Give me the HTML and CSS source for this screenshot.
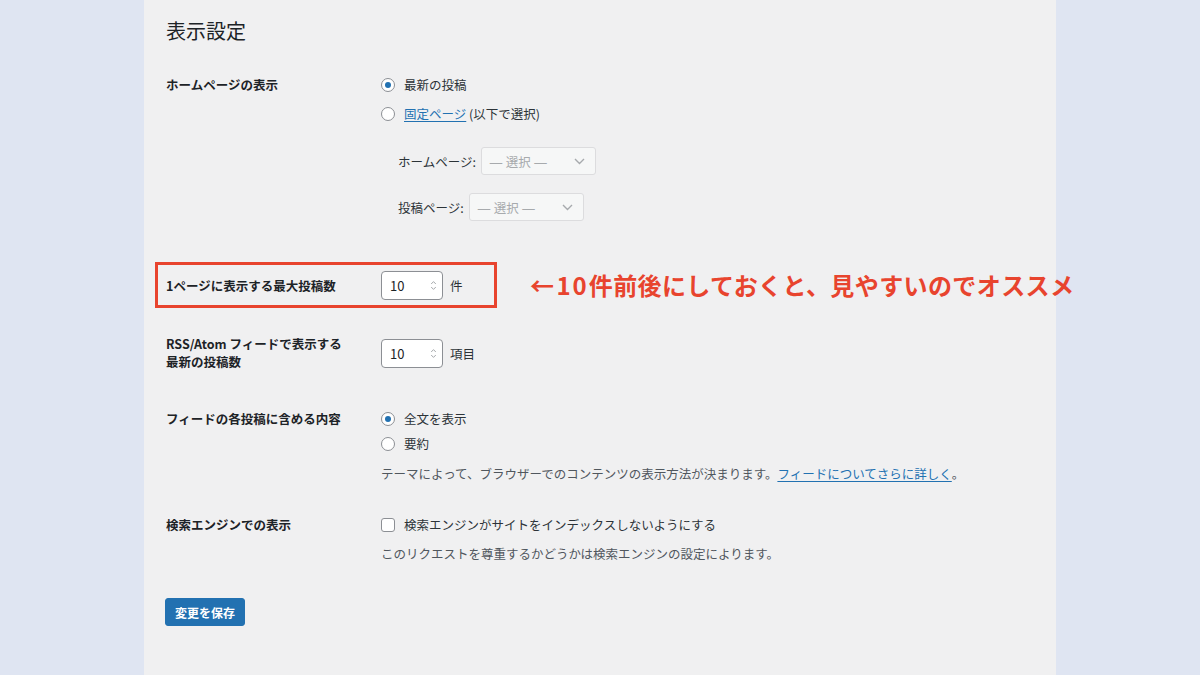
FILE: index.html
```html
<!DOCTYPE html>
<html lang="ja">
<head>
<meta charset="utf-8">
<title>表示設定</title>
<link rel="stylesheet" href="styles.css">
</head>
<body>
<div class="page">
  <div class="side"></div>
  <main class="panel">
    <h1 class="title">表示設定</h1>

    <div class="row row-home">
      <div class="th">ホームページの表示</div>
      <div class="td">
        <div class="opt"><span class="radio on"></span>最新の投稿</div>
        <div class="opt"><span class="radio"></span><a class="link" href="#">固定ページ</a>&nbsp;(以下で選択)</div>
        <div class="sub sub-first"><span class="sub-label">ホームページ:</span><span class="select"><span class="sel-text">— 選択 —</span><svg class="chev" width="11" height="7" viewBox="0 0 11 7"><path d="M1 1l4.5 4.5L10 1" fill="none" stroke="#a7aaad" stroke-width="1.4"/></svg></span></div>
        <div class="sub"><span class="sub-label">投稿ページ:</span><span class="select"><span class="sel-text">— 選択 —</span><svg class="chev" width="11" height="7" viewBox="0 0 11 7"><path d="M1 1l4.5 4.5L10 1" fill="none" stroke="#a7aaad" stroke-width="1.4"/></svg></span></div>
      </div>
    </div>

    <div class="hl-wrap">
      <div class="row hl">
        <div class="th">1ページに表示する最大投稿数</div>
        <div class="td td-inline">
          <span class="num">10<svg class="spin" width="7" height="11" viewBox="0 0 7 11"><path d="M1.2 4L3.5 1.6 5.8 4M1.2 7l2.3 2.4L5.8 7" fill="none" stroke="#a7aaad" stroke-width="1"/></svg></span>
          <span class="unit">件</span>
        </div>
      </div>
      <p class="note">←<span class="note-num">10</span>件前後にしておくと、見やすいのでオススメ</p>
    </div>

    <div class="row row-rss">
      <div class="th th-two">RSS/Atom フィードで表示する<br>最新の投稿数</div>
      <div class="td td-inline td-rss">
        <span class="num">10<svg class="spin" width="7" height="11" viewBox="0 0 7 11"><path d="M1.2 4L3.5 1.6 5.8 4M1.2 7l2.3 2.4L5.8 7" fill="none" stroke="#a7aaad" stroke-width="1"/></svg></span>
        <span class="unit">項目</span>
      </div>
    </div>

    <div class="row row-feed">
      <div class="th">フィードの各投稿に含める内容</div>
      <div class="td">
        <div class="opt"><span class="radio on"></span>全文を表示</div>
        <div class="opt"><span class="radio"></span>要約</div>
        <p class="desc desc-feed">テーマによって、ブラウザーでのコンテンツの表示方法が決まります。<a class="link" href="#">フィードについてさらに詳しく</a>。</p>
      </div>
    </div>

    <div class="row row-search">
      <div class="th">検索エンジンでの表示</div>
      <div class="td">
        <div class="opt"><span class="check"></span>検索エンジンがサイトをインデックスしないようにする</div>
        <p class="desc desc-search">このリクエストを尊重するかどうかは検索エンジンの設定によります。</p>
      </div>
    </div>

    <button class="btn" type="button">変更を保存</button>
  </main>
  <div class="side"></div>
</div>
</body>
</html>
```

FILE: styles.css
```css
* { box-sizing: border-box; }
html, body { margin: 0; padding: 0; }
body {
  width: 1200px;
  height: 675px;
  overflow: hidden;
  background: #dfe5f2;
  font-family: "Noto Sans CJK JP", "Noto Sans", sans-serif;
  color: #2c3338;
  font-size: 12.5px;
}
.page {
  display: flex;
  height: 675px;
}
.side {
  width: 144px;
  flex: none;
  background: #dfe5f2;
}
.panel {
  width: 912px;
  flex: none;
  background: #f0f0f1;
  padding: 17px 0 0 22px;
  position: relative;
  z-index: 1;
  overflow: visible;
}
.title {
  margin: 0;
  font-size: 20px;
  line-height: 28px;
  font-weight: 400;
  color: #1d2327;
}
.row {
  display: flex;
  align-items: flex-start;
}
.th {
  width: 215px;
  flex: none;
  font-weight: 700;
  color: #1d2327;
  font-size: 12.5px;
}
.td { flex: none; }

.row-home { margin-top: 25px; }
.row-home .th { line-height: 29px; }
.row-home .opt { line-height: 29px; height: 29px; }

.opt {
  display: flex;
  align-items: center;
  white-space: nowrap;
}
.radio {
  width: 14px;
  height: 14px;
  border-radius: 50%;
  border: 1px solid #8c8f94;
  background: #fff;
  margin-right: 9px;
  flex: none;
  display: flex;
  align-items: center;
  justify-content: center;
}
.radio.on::after {
  content: "";
  width: 6px;
  height: 6px;
  border-radius: 50%;
  background: #2271b1;
}
.check {
  width: 14px;
  height: 14px;
  border-radius: 3px;
  border: 1px solid #8c8f94;
  background: #fff;
  margin-right: 9px;
  flex: none;
}
.link {
  color: #2271b1;
  text-decoration: underline;
  text-underline-offset: 2px;
}

.sub {
  display: flex;
  align-items: center;
  gap: 5px;
  margin-left: 17px;
  margin-top: 18px;
  color: #2c3338;
}
.sub-first { margin-top: 19px; }
.select {
  display: flex;
  align-items: center;
  justify-content: space-between;
  width: 115px;
  height: 28px;
  padding: 0 10px 0 8px;
  border: 1px solid #dcdcde;
  border-radius: 3px;
  background: #f6f7f7;
  color: #a7aaad;
}
.sel-text { font-family: "Liberation Sans", "Noto Sans CJK JP", sans-serif; }

.hl-wrap {
  display: flex;
  align-items: center;
  margin-top: 41px;
  margin-left: -11px;
}
.hl {
  flex: none;
  width: 342px;
  height: 46px;
  border: 3px solid #e8442e;
  padding: 0 0 0 8px;
  align-items: center;
}
.td-inline {
  display: flex;
  align-items: center;
  gap: 7px;
}
.num {
  display: flex;
  align-items: center;
  justify-content: space-between;
  width: 62px;
  height: 29px;
  border: 1px solid #8c8f94;
  border-radius: 4px;
  background: #fff;
  padding: 0 5px 0 8px;
  font-size: 13px;
  color: #1d2327;
}
.unit { color: #2c3338; }
.note {
  flex: none;
  margin: 0 0 0 33px;
  font-size: 24px;
  line-height: 30px;
  font-weight: 700;
  color: #e8442e;
  white-space: nowrap;
  letter-spacing: 0.4px;
}
.note-num { letter-spacing: 2px; margin-left: 2px; }

.row-rss { margin-top: 27px; }
.th-two { line-height: 18px; }
.td-rss { margin-top: 4px; }

.row-feed { margin-top: 35px; }
.row-feed .th { line-height: 25px; }
.row-feed .opt { height: 25px; line-height: 25px; }
.desc {
  margin: 0;
  line-height: 20px;
  color: #50575e;
  white-space: nowrap;
}
.desc-feed { margin-top: 8px; }

.row-search { margin-top: 29px; }
.row-search .th { line-height: 24px; }
.row-search .opt { height: 24px; line-height: 24px; }
.desc-search { margin-top: 7px; }

.btn {
  display: block;
  margin: 34px 0 0 -1px;
  width: 80px;
  height: 28px;
  border: 1px solid #2271b1;
  border-radius: 3px;
  background: #2271b1;
  color: #fff;
  font-family: "Noto Sans CJK JP", sans-serif;
  font-size: 12px;
  font-weight: 700;
  padding: 0;
}
```
